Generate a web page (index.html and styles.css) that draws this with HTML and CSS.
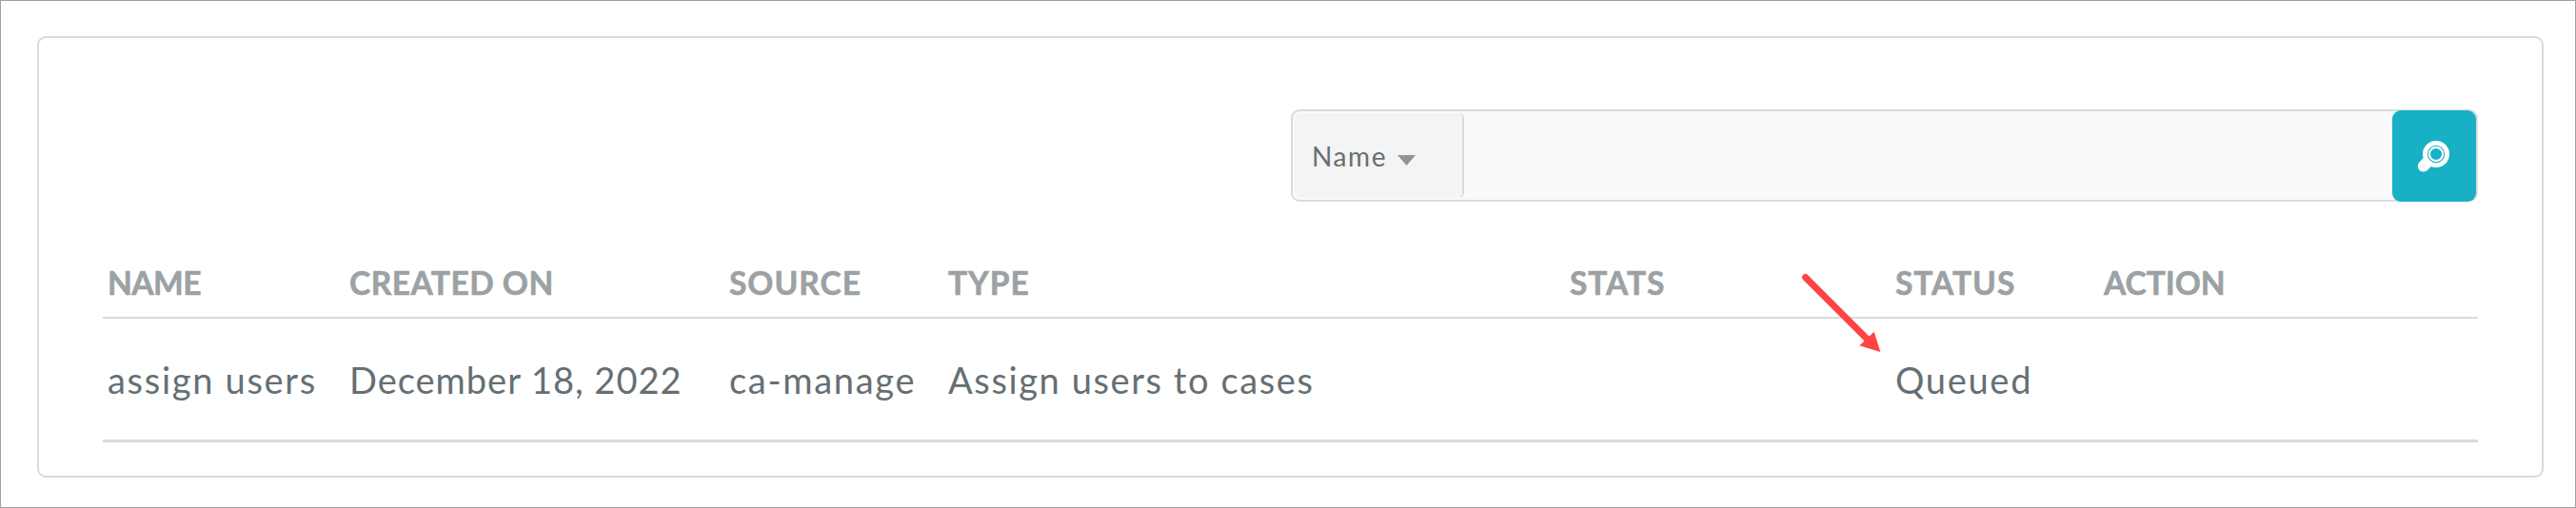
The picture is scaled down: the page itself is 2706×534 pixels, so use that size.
FILE: index.html
```html
<!DOCTYPE html>
<html lang="en">
<head>
<meta charset="utf-8">
<title>Jobs</title>
<link rel="stylesheet" href="styles.css">
</head>
<body>
<main class="card">
  <form class="search">
    <div class="search-field"><span class="search-label">Name</span><svg class="caret" viewBox="0 0 19 11"><path d="M0 0H19L9.5 11Z"/></svg></div>
    <div class="search-input"></div>
    <button class="search-button" type="button" aria-label="Search">
      <svg viewBox="0 0 34 34"><path class="handle" d="M14 19 6.8 26.6"/><circle class="ring" cx="20" cy="14" r="11.6"/><circle class="lens" cx="20" cy="14" r="7.1"/></svg>
    </button>
  </form>
  <table class="jobs">
    <colgroup><col class="c-name"><col class="c-created"><col class="c-source"><col class="c-type"><col class="c-stats"><col class="c-status"><col class="c-action"></colgroup>
    <thead>
      <tr><th><span class="h-name">NAME</span></th><th><span class="h-created">CREATED ON</span></th><th><span class="h-wide">SOURCE</span></th><th><span class="h-wide">TYPE</span></th><th><span class="h-wide">STATS</span></th><th><span class="h-wide">STATUS</span></th><th><span class="h-action">ACTION</span></th></tr>
    </thead>
    <tbody>
      <tr><td>assign users</td><td><span class="d-created">December 18, 2022</span></td><td>ca-manage</td><td><span class="d-type">Assign users to cases</span></td><td></td><td><span class="d-status">Queued</span></td><td></td></tr>
    </tbody>
  </table>
</main>
<svg class="pointer" viewBox="0 0 90 90"><path class="shaft" d="M7.5 7.5 72 72"/><path class="head" d="M86.3 86 79.7 64.7 64.3 79.3Z"/></svg>
</body>
</html>
```
FILE: styles.css
```css
* { box-sizing: border-box; }
body {
  margin: 0;
  height: 534px;
  padding: 37px 33px 31px 38px;
  border: 1px solid #a0a0a0;
  background: #fff;
  font-family: Lato, "Open Sans", sans-serif;
  color: #656f74;
  position: relative;
  overflow: hidden;
}
.card {
  height: 464px;
  padding: 75px 67px 0;
  border: 2px solid #dadada;
  border-radius: 9px;
}
.search {
  display: flex;
  width: 1247px;
  height: 97px;
  margin: 0 0 0 auto;
  border: 2px solid #dadbdb;
  border-radius: 9px;
  background: #f9fafc;
}
.search-field {
  display: flex;
  align-items: center;
  width: 178px;
  height: 89px;
  margin: 2px 0 0 2px;
  padding-left: 18px;
  border-right: 2px solid #dadbdb;
  border-radius: 5px;
  background: #f4f4f4;
  font-size: 28px;
}
.search-label { letter-spacing: 1.6px; }
.caret { width: 19px; height: 11px; margin: 10px 0 0 11px; fill: #939393; }
.search-input { flex: 1; }
.search-button {
  display: flex;
  align-items: flex-start;
  width: 88px;
  height: 96px;
  margin: -1px 0 0;
  padding: 32px 0 0 26px;
  border: 0;
  border-radius: 9px;
  background: #17b0c5;
}
.search-button svg { flex: none; width: 34px; height: 34px; fill: none; stroke: #fff; }
.handle { stroke-width: 12; stroke-linecap: round; }
.ring { fill: #17b0c5; stroke-width: 4.8; }
.lens { stroke-width: 2.2; }
.jobs {
  width: 2495px;
  table-layout: fixed;
  border-collapse: separate;
  border-spacing: 0;
}
.c-name { width: 254px; }
.c-created { width: 399px; }
.c-source { width: 230px; }
.c-type { width: 653px; }
.c-stats { width: 342px; }
.c-status { width: 219px; }
.jobs th, .jobs td { padding: 0 0 0 5px; text-align: left; white-space: nowrap; }
.jobs th {
  height: 123px;
  padding-top: 48px;
  border-bottom: 2px solid #dadada;
  font-size: 33.5px;
  font-weight: 700;
  color: #9ca1a4;
  -webkit-text-stroke: 0.6px #9ca1a4;
}
.jobs td {
  height: 130px;
  padding-top: 1px;
  border-bottom: 3px solid #dadada;
  font-size: 38px;
  letter-spacing: 1.7px;
}
.h-name { letter-spacing: -0.5px; }
.h-created { letter-spacing: 0.5px; }
.h-wide { letter-spacing: 1px; }
.d-created { letter-spacing: 1px; }
.d-type { letter-spacing: 1.6px; }
.d-status { letter-spacing: 1.7px; }
.pointer { position: absolute; left: 1888px; top: 283px; width: 90px; height: 90px; }
.shaft { stroke: #ff4444; stroke-width: 7; stroke-linecap: round; }
.head { fill: #ff4444; }
```
